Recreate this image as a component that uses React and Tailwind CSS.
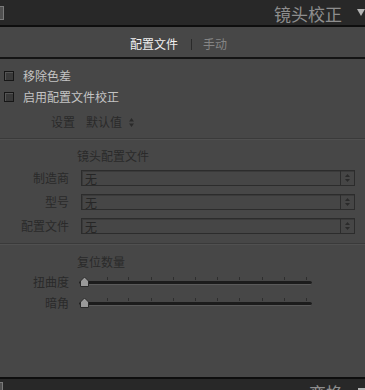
import React from 'react';

const font = { fontFamily: '"Noto Sans CJK SC", "Noto Sans", sans-serif' };

const Checkbox = ({ label }) => (
  <div className="flex items-center h-[21px]">
    <div className="ml-[4px] w-[10px] h-[10px] border border-[#161616] bg-[#3a3a3a] shadow-[inset_1px_1px_0_#555]" />
    <span className="ml-[9px] text-[12px] text-[#c4c4c4] leading-none">{label}</span>
  </div>
);

const SelectRow = ({ label }) => (
  <div className="flex items-center h-[15px]">
    <span className="w-[70px] pr-[1px] text-right text-[12px] text-[#2a2a2a] leading-none">{label}</span>
    <div className="ml-[11px] w-[274px] h-[16px] flex border border-[#2c2c2c] bg-[#464646] shadow-[inset_1px_1px_0_#3a3a3a]">
      <span className="flex-1 pl-[3px] text-[12px] text-[#262626] leading-[15px]">无</span>
      <div className="w-[14px] border-l border-[#2c2c2c] flex flex-col items-center justify-center gap-[2px]">
        <svg width="5" height="3" viewBox="0 0 5 3"><path d="M0 3 L2.5 0 L5 3 Z" fill="#2a2a2a" /></svg>
        <svg width="5" height="3" viewBox="0 0 5 3"><path d="M0 0 L2.5 3 L5 0 Z" fill="#2a2a2a" /></svg>
      </div>
    </div>
  </div>
);

const ticks = [84, 107, 128, 151, 173, 195, 217, 239, 262, 284, 306];

const Slider = ({ label }) => (
  <div className="flex items-center h-[14px]">
    <span className="w-[70px] pr-[1px] text-right text-[12px] text-[#2a2a2a] leading-none">{label}</span>
    <div className="relative ml-[9px] w-[233px] h-[14px]">
      {ticks.map((x) => (
        <div key={x} className="absolute top-[2px] w-[1px] h-[3px] bg-[#2e2e2e]" style={{ left: x - 79 }} />
      ))}
      <div className="absolute left-0 right-0 top-[6px] h-[4px] rounded-full bg-[#1c1c1c] border-b border-[#5a5a5a]" />
      <svg className="absolute left-[1px] top-[2px]" width="9" height="10" viewBox="0 0 9 10">
        <path d="M4.5 0 L8.5 4 L8.5 9.5 L0.5 9.5 L0.5 4 Z" fill="#9a9a9a" stroke="#2a2a2a" strokeWidth="1" />
      </svg>
    </div>
  </div>
);

export default function App() {
  return (
    <div className="w-[365px] h-[390px] flex flex-col bg-[#474747] overflow-hidden select-none" style={font}>
      {/* panel header */}
      <div className="h-[27px] shrink-0 bg-[#282828] flex items-center border-b-2 border-[#0e0e0e]">
        <div className="w-[4px] h-[14px] border border-l-0 border-[#7a7a7a] bg-[#505050]" />
        <span className="ml-auto pt-[2px] text-[17px] text-[#8e8e8e] leading-none">镜头校正</span>
        <svg className="ml-[15px]" width="8" height="7" viewBox="0 0 8 7">
          <path d="M0 0 L8 0 L4 7 Z" fill="#b4b4b4" />
        </svg>
      </div>

      {/* tabs */}
      <div className="h-[32px] shrink-0 flex items-center pt-[4px] border-b-2 border-[#141414]">
        <span className="ml-[130px] text-[12px] text-[#f0f0f0] leading-none">配置文件</span>
        <div className="ml-[13px] w-[1px] h-[11px] bg-[#2a2a2a]" />
        <span className="ml-[11px] text-[12px] text-[#858585] leading-none">手动</span>
      </div>

      {/* options */}
      <div className="pt-[6px]">
        <Checkbox label="移除色差" />
        <Checkbox label="启用配置文件校正" />
        <div className="flex items-center h-[24px] mt-[3px] text-[12px] text-[#2a2a2a] leading-none">
          <span className="ml-[51px]">设置</span>
          <span className="ml-[11px]">默认值</span>
          <svg className="ml-[7px]" width="5" height="9" viewBox="0 0 5 9">
            <path d="M0 3.5 L2.5 0 L5 3.5 Z M0 5.5 L2.5 9 L5 5.5 Z" fill="#2a2a2a" />
          </svg>
        </div>
      </div>

      <div className="mt-[4px] h-[2px] border-t border-[#3a3a3a] border-b border-b-[#505050]" />

      {/* lens profile */}
      <div className="pt-[10px]">
        <div className="ml-[77px] text-[12px] text-[#2a2a2a] leading-none h-[14px]">镜头配置文件</div>
        <div className="mt-[6px] flex flex-col gap-[9px]">
          <SelectRow label="制造商" />
          <SelectRow label="型号" />
          <SelectRow label="配置文件" />
        </div>
      </div>

      <div className="mt-[10px] h-[2px] border-t border-[#3a3a3a] border-b border-b-[#505050]" />

      {/* amounts */}
      <div className="pt-[11px]">
        <div className="ml-[77px] text-[12px] text-[#2a2a2a] leading-none h-[14px]">复位数量</div>
        <div className="mt-[5px] flex flex-col gap-[7px]">
          <Slider label="扭曲度" />
          <Slider label="暗角" />
        </div>
      </div>

      <div className="flex-1" />

      {/* next panel header, cut off */}
      <div className="h-[13px] shrink-0 bg-[#282828] border-t-2 border-[#0e0e0e] flex items-start overflow-hidden">
        <div className="mt-[3px] w-[3px] h-[14px] border border-l-0 border-[#7a7a7a] bg-[#505050]" />
        <span className="ml-auto mt-[5px] text-[17px] text-[#8e8e8e] leading-none">变换</span>
        <div className="ml-[15px] mt-[9px] w-[7px] h-[4px] bg-[#b4b4b4]" />
      </div>
    </div>
  );
}
